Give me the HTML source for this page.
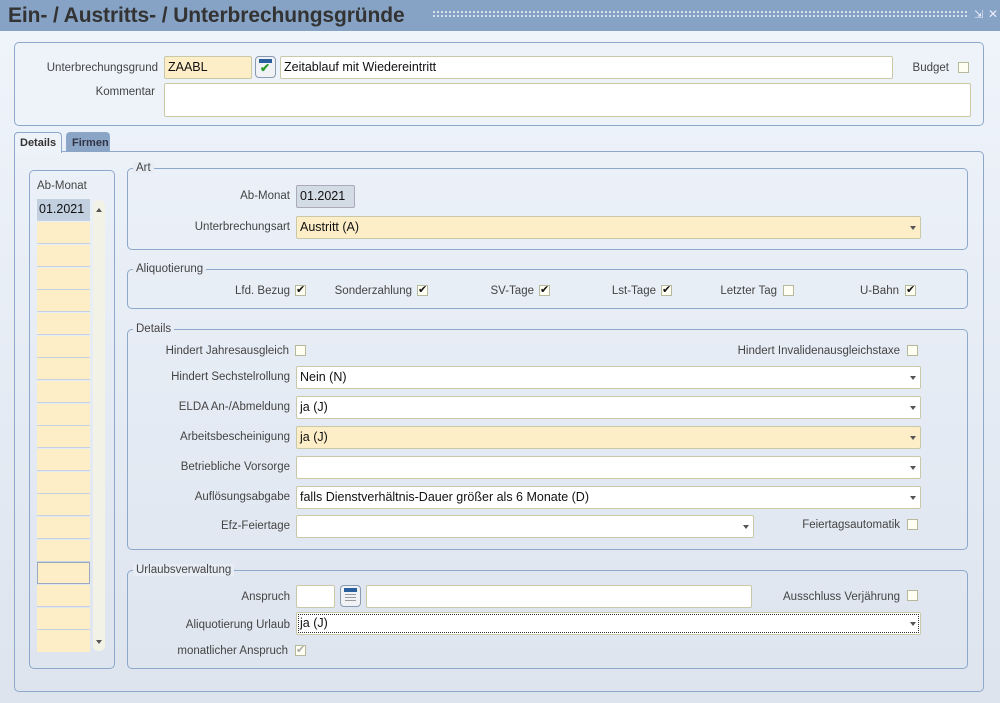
<!DOCTYPE html>
<html><head><meta charset="utf-8"><style>
*{box-sizing:border-box;margin:0;padding:0}
body{width:1000px;height:703px;overflow:hidden;background:#e4eaf2;font-family:"Liberation Sans",sans-serif;font-size:11.5px;color:#333;position:relative}
.a{position:absolute}
.title{left:0;top:0;width:1000px;height:31px;background:#86a2c4}
.title span{position:absolute;left:8px;top:4px;font-size:21px;font-weight:bold;color:#333;letter-spacing:-0.1px}
.dots{position:absolute;left:432px;top:10px;width:536px;height:8px;background-image:radial-gradient(circle,#e8eef6 0.8px,transparent 1.2px);background-size:4px 4px}
.box{position:absolute;border:1px solid #8ea8cb;border-radius:5px}
.lbl{position:absolute;text-align:right;white-space:nowrap;color:#444}
.in{position:absolute;background:#fff;border:1px solid #c9c9a8;border-radius:2px;font-size:12.5px;padding:3px 3px;color:#111;white-space:nowrap;overflow:hidden}
.y{background:#fdeec8}
.sel::after{content:"";position:absolute;right:4px;top:9px;border:3px solid transparent;border-top:4px solid #555}
.cb{position:absolute;width:11px;height:11px;border:1px solid #b8b89a;background:#fffef2}
.cb.c::after{content:"✔";position:absolute;left:0px;top:-3px;font-size:11px;color:#111}
.cb.g::after{content:"✔";position:absolute;left:0px;top:-3px;font-size:11px;color:#aaa}
.leg{position:absolute;background:#e8edf5;padding:0 3px;color:#444}
.tab{position:absolute;height:20px;border:1px solid #8ea8cb;border-bottom:none;border-radius:4px 4px 0 0;font-weight:bold;font-size:11px;padding:4px 5px}
.row{position:absolute;left:37px;width:53px;height:22px;background:#fdeec8;border-bottom:1px solid #c6d2e2}
.btn{position:absolute;width:21px;height:22px;border:1px solid #8a9bb0;border-radius:4px;background:#f0f2f5}
</style></head><body>
<div class="a title"><span>Ein- / Austritts- / Unterbrechungsgründe</span><div class="dots"></div>
<div class="a" style="left:974px;top:8px;color:#eef;font-size:11px">⇲</div><div class="a" style="left:988px;top:7px;color:#eef;font-size:12px">✕</div></div>
<div class="a" style="left:0;top:31px;width:1000px;height:672px;background:linear-gradient(#eff4fb,#dde4ee)"></div>

<div class="box" style="left:14px;top:42px;width:970px;height:84px;background:#eef3fa"></div>
<div class="lbl" style="left:20px;top:62px;width:138px">Unterbrechungsgrund</div>
<div class="in y" style="left:164px;top:56px;width:88px;height:23px">ZAABL</div>
<div class="btn" style="left:255px;top:56px">
<div class="a" style="left:3px;top:2px;width:13px;height:4px;background:#2a5f9e"></div>
<div class="a" style="left:4px;top:4px;font-size:12px;color:#2a9a2a;font-weight:bold">✔</div></div>
<div class="in" style="left:280px;top:56px;width:613px;height:23px">Zeitablauf mit Wiedereintritt</div>
<div class="lbl" style="left:880px;top:62px;width:69px">Budget</div>
<div class="cb" style="left:958px;top:62px"></div>
<div class="lbl" style="left:20px;top:86px;width:135px">Kommentar</div>
<div class="in" style="left:164px;top:83px;width:807px;height:34px"></div>

<div class="box" style="left:14px;top:151px;width:970px;height:541px;border-radius:0 5px 5px 5px"></div>
<div class="tab" style="left:14px;top:132px;width:48px;background:#eef3fa;height:21px;color:#333">Details</div>
<div class="tab" style="left:66px;top:132px;width:44px;background:#8aa5c6;color:#334">Firmen</div>

<div class="box" style="left:29px;top:170px;width:86px;height:499px"></div>
<div class="lbl" style="left:37px;top:180px;text-align:left">Ab-Monat</div>
<div class="row" style="top:199px;background:#c2cfdf;font-size:12.5px;color:#111;padding:3px 2px">01.2021</div>
<div class="row" style="top:222px"></div><div class="row" style="top:245px"></div><div class="row" style="top:268px"></div><div class="row" style="top:290px"></div><div class="row" style="top:313px"></div><div class="row" style="top:336px"></div><div class="row" style="top:358px"></div><div class="row" style="top:381px"></div><div class="row" style="top:404px"></div><div class="row" style="top:426px"></div><div class="row" style="top:449px"></div><div class="row" style="top:472px"></div><div class="row" style="top:494px"></div><div class="row" style="top:517px"></div><div class="row" style="top:540px"></div><div class="row" style="top:562px;border:1px solid #9aa9bd"></div><div class="row" style="top:585px"></div><div class="row" style="top:608px"></div><div class="row" style="top:630px;height:22px;border:none"></div>
<div class="a" style="left:93px;top:200px;width:12px;height:451px;background:#f2f2e6;border-radius:5px"></div>
<div class="a" style="left:96px;top:205px;border:3px solid transparent;border-bottom:4px solid #555"></div>
<div class="a" style="left:96px;top:640px;border:3px solid transparent;border-top:4px solid #555"></div>

<div class="box" style="left:127px;top:168px;width:841px;height:82px"></div>
<div class="leg" style="left:133px;top:162px">Art</div>
<div class="lbl" style="left:150px;top:190px;width:140px">Ab-Monat</div>
<div class="in" style="left:296px;top:185px;width:59px;height:23px;background:#d3dbe5;border-color:#aab">01.2021</div>
<div class="lbl" style="left:150px;top:221px;width:140px">Unterbrechungsart</div>
<div class="in y sel" style="left:296px;top:216px;width:625px;height:23px">Austritt (A)</div>

<div class="box" style="left:127px;top:269px;width:841px;height:40px"></div>
<div class="leg" style="left:133px;top:263px">Aliquotierung</div>
<div class="lbl" style="left:190px;top:285px;width:100px">Lfd. Bezug</div><div class="cb c" style="left:295px;top:285px"></div>
<div class="lbl" style="left:300px;top:285px;width:112px">Sonderzahlung</div><div class="cb c" style="left:417px;top:285px"></div>
<div class="lbl" style="left:440px;top:285px;width:94px">SV-Tage</div><div class="cb c" style="left:539px;top:285px"></div>
<div class="lbl" style="left:560px;top:285px;width:96px">Lst-Tage</div><div class="cb c" style="left:661px;top:285px"></div>
<div class="lbl" style="left:680px;top:285px;width:97px">Letzter Tag</div><div class="cb" style="left:783px;top:285px"></div>
<div class="lbl" style="left:820px;top:285px;width:79px">U-Bahn</div><div class="cb c" style="left:905px;top:285px"></div>

<div class="box" style="left:127px;top:329px;width:841px;height:221px"></div>
<div class="leg" style="left:133px;top:323px">Details</div>
<div class="lbl" style="left:100px;top:345px;width:189px">Hindert Jahresausgleich</div><div class="cb" style="left:295px;top:345px"></div>
<div class="lbl" style="left:700px;top:345px;width:200px">Hindert Invalidenausgleichstaxe</div><div class="cb" style="left:907px;top:345px"></div>
<div class="lbl" style="left:100px;top:371px;width:190px">Hindert Sechstelrollung</div><div class="in sel" style="left:296px;top:366px;width:625px;height:23px">Nein (N)</div>
<div class="lbl" style="left:100px;top:401px;width:190px">ELDA An-/Abmeldung</div><div class="in sel" style="left:296px;top:396px;width:625px;height:23px">ja (J)</div>
<div class="lbl" style="left:100px;top:431px;width:190px">Arbeitsbescheinigung</div><div class="in y sel" style="left:296px;top:426px;width:625px;height:23px">ja (J)</div>
<div class="lbl" style="left:100px;top:461px;width:190px">Betriebliche Vorsorge</div><div class="in sel" style="left:296px;top:456px;width:625px;height:23px"></div>
<div class="lbl" style="left:100px;top:491px;width:190px">Auflösungsabgabe</div><div class="in sel" style="left:296px;top:486px;width:625px;height:23px">falls Dienstverhältnis-Dauer größer als 6 Monate (D)</div>
<div class="lbl" style="left:100px;top:520px;width:190px">Efz-Feiertage</div><div class="in sel" style="left:296px;top:515px;width:458px;height:23px"></div>
<div class="lbl" style="left:760px;top:519px;width:140px">Feiertagsautomatik</div><div class="cb" style="left:907px;top:519px"></div>

<div class="box" style="left:127px;top:570px;width:841px;height:99px"></div>
<div class="leg" style="left:133px;top:564px">Urlaubsverwaltung</div>
<div class="lbl" style="left:150px;top:591px;width:140px">Anspruch</div>
<div class="in" style="left:296px;top:585px;width:39px;height:23px"></div>
<div class="btn" style="left:340px;top:585px">
<div class="a" style="left:3px;top:2px;width:13px;height:4px;background:#2a5f9e"></div>
<div class="a" style="left:4px;top:8px;width:11px;height:9px;background:repeating-linear-gradient(#999 0 1px,transparent 1px 3px)"></div></div>
<div class="in" style="left:366px;top:585px;width:386px;height:23px"></div>
<div class="lbl" style="left:740px;top:591px;width:160px">Ausschluss Verjährung</div><div class="cb" style="left:907px;top:590px"></div>
<div class="lbl" style="left:150px;top:619px;width:140px">Aliquotierung Urlaub</div>
<div class="in sel" style="left:296px;top:612px;width:625px;height:23px;outline:1px dotted #333;outline-offset:-3px">ja (J)</div>
<div class="lbl" style="left:120px;top:645px;width:168px">monatlicher Anspruch</div><div class="cb g" style="left:295px;top:645px"></div>
</body></html>
